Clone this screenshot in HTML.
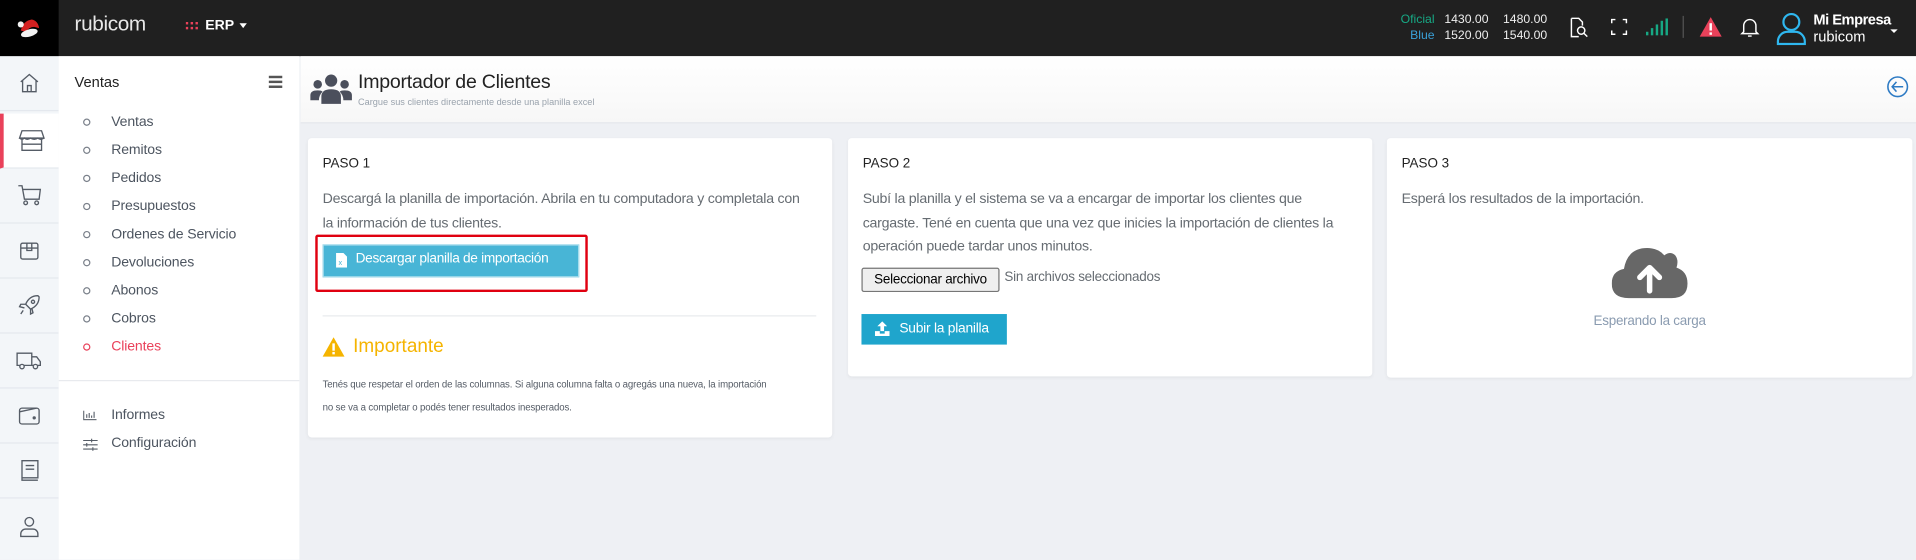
<!DOCTYPE html>
<html><head><meta charset="utf-8">
<style>
*{box-sizing:border-box;margin:0;padding:0}
html,body{width:1916px;height:559px;overflow:hidden;background:#eef0f4}
#w{position:absolute;left:0;top:0;width:1568px;height:458px;transform:scale(1.22194);transform-origin:0 0;font-family:"Liberation Sans",sans-serif;background:#eef0f4}
.a{position:absolute}
.top{left:0;top:0;width:1568px;height:46px;background:#202020}
.rail{left:0;top:46px;width:48px;height:412px;background:#f3f6f9}
.ri{position:absolute;left:0;width:48px;height:45px;border-bottom:1px solid #e4e8ee;display:flex;align-items:center;justify-content:center}
.sub{left:48px;top:46px;width:197px;height:412px;background:#fff}
.sub .it{position:absolute;left:43px;font-size:11.5px;color:#4d5560;letter-spacing:-.1px}
.sub .dot{position:absolute;left:20px;width:6px;height:6px;border:1px solid #7a808a;border-radius:50%}
.card{position:absolute;background:#fff;border-radius:3px;box-shadow:0 1px 3px rgba(0,0,0,.05)}
.h{position:absolute;font-size:11px;color:#222}
.p{position:absolute;font-size:11.6px;color:#666c72;line-height:19.5px;letter-spacing:-.2px;white-space:nowrap}
</style></head><body><div id="w">
<div class="a top"></div>
<div class="a" style="left:0;top:0;width:48px;height:46px;background:#000"></div>
<svg class="a" style="left:12px;top:12px" width="24" height="22" viewBox="0 0 24 22"><path d="M5 13 Q7 5 14 4 Q19 5 20 11 L16 10 Q12 10 9 14Z" fill="#d42020"/><ellipse cx="12" cy="15" rx="7" ry="3" fill="#f2f2f2" transform="rotate(-15 12 15)"/><circle cx="5" cy="8" r="2.5" fill="#f2f2f2"/></svg>
<div class="a" style="left:61px;top:10px;font-size:17px;color:#e8e8e8;letter-spacing:-.3px">rubicom</div>
<svg class="a" style="left:152px;top:18px" width="10" height="8"><g fill="#e9415a"><rect x="0" y="0" width="2" height="2"/><rect x="4" y="0" width="2" height="2"/><rect x="8" y="0" width="2" height="2"/><rect x="0" y="4" width="2" height="2"/><rect x="4" y="4" width="2" height="2"/><rect x="8" y="4" width="2" height="2"/></g></svg>
<div class="a" style="left:168px;top:15px;font-size:11.5px;color:#fff;font-weight:bold">ERP</div>
<div class="a" style="left:196px;top:19px;border:3.5px solid transparent;border-top:4px solid #fff"></div>
<div class="a" style="left:1140px;top:10px;font-size:10px;color:#17a884;text-align:right;width:34px;line-height:13px">Oficial<br><span style="color:#3aa0d8">Blue</span></div>
<div class="a" style="left:1182px;top:10px;font-size:10px;color:#eee;line-height:13px">1430.00<br>1520.00</div>
<div class="a" style="left:1230px;top:10px;font-size:10px;color:#eee;line-height:13px">1480.00<br>1540.00</div>
<svg class="a" style="left:1282px;top:13px" width="20" height="20" viewBox="0 0 20 20" fill="none" stroke="#fff" stroke-width="1.2"><path d="M4 2h6l3 3v3M4 2v15h6"/><circle cx="12" cy="12" r="3"/><path d="M14 14l3 3"/></svg>
<svg class="a" style="left:1318px;top:15px" width="14" height="14" fill="none" stroke="#fff" stroke-width="1.2"><path d="M1 4V1h3M10 1h3v3M13 10v3h-3M4 13H1v-3"/></svg>
<svg class="a" style="left:1347px;top:15px" width="20" height="14"><g fill="#17a884"><rect x="0" y="11" width="2" height="3"/><rect x="4" y="8" width="2" height="6"/><rect x="8" y="5" width="2" height="9"/><rect x="12" y="2" width="2" height="12"/><rect x="16" y="0" width="2" height="14"/></g></svg>
<div class="a" style="left:1377px;top:13px;width:1px;height:18px;background:#555"></div>
<svg class="a" style="left:1390px;top:13px" width="20" height="18" viewBox="0 0 20 18"><path d="M10 1L19 17H1Z" fill="#e9415a"/><rect x="9" y="6" width="2" height="6" fill="#fff"/><rect x="9" y="13.5" width="2" height="2" fill="#fff"/></svg>
<svg class="a" style="left:1424px;top:12px" width="16" height="20" fill="none" stroke="#fff" stroke-width="1.2"><path d="M3 14V9a5 5 0 0110 0v5l1.5 1.5h-13Z"/><path d="M6.5 17.5h3"/></svg>
<svg class="a" style="left:1453px;top:10px" width="26" height="27" fill="none" stroke="#2fb7ef" stroke-width="1.8"><circle cx="13" cy="8" r="6.5"/><path d="M2 26v-2a8 8 0 018-8h6a8 8 0 018 8v2Z"/></svg>
<div class="a" style="left:1484px;top:9px;font-size:12px;color:#fff;font-weight:bold;letter-spacing:-.4px">Mi Empresa</div>
<div class="a" style="left:1484px;top:23px;font-size:12px;color:#fff">rubicom</div>
<div class="a" style="left:1547px;top:24px;border:3px solid transparent;border-top:3.5px solid #fff"></div>

<div class="a rail"></div>
<div class="ri" style="top:46px"><svg width="18" height="18" fill="none" stroke="#555c66" stroke-width="1.1"><path d="M2 8L9 2l7 6M3.5 7v9h11V7M7.5 16v-5h3v5"/></svg></div>
<div class="ri" style="top:93px;background:#fff;border-left:3px solid #e9415a;height:45px"><svg width="22" height="20" fill="none" stroke="#555c66" stroke-width="1.1"><path d="M3 2h16l2 6H1Z"/><path d="M1 8q2 2 4 0q2 2 5 0q3 2 6 0q2 2 5 0M3 9v9h16V9M3 13h16"/></svg></div>
<div class="ri" style="top:138px"><svg width="20" height="18" fill="none" stroke="#555c66" stroke-width="1.1"><path d="M1 1h3l2 11h12l1-8H5"/><circle cx="7" cy="15" r="1.5"/><circle cx="16" cy="15" r="1.5"/></svg></div>
<div class="ri" style="top:183px"><svg width="18" height="18" fill="none" stroke="#555c66" stroke-width="1.1"><rect x="2" y="3" width="14" height="13" rx="1.5"/><path d="M2 7h14M7 3v6h4V3"/></svg></div>
<div class="ri" style="top:228px"><svg width="20" height="20" fill="none" stroke="#555c66" stroke-width="1.1"><path d="M17 2q-7 0-10 7l4 4q7-3 7-10ZM7 9L3 9l-1 2 4 1M11 13l0 4 2-1 -1-4M5 14l-2 3"/><circle cx="13" cy="7" r="1.3"/></svg></div>
<div class="ri" style="top:273px"><svg width="22" height="18" fill="none" stroke="#555c66" stroke-width="1.1"><path d="M1 3h12v10H1ZM13 6h4l3 4v3h-7"/><circle cx="5" cy="14" r="1.8" fill="#f3f6f9"/><circle cx="16" cy="14" r="1.8" fill="#f3f6f9"/></svg></div>
<div class="ri" style="top:318px"><svg width="20" height="18" fill="none" stroke="#555c66" stroke-width="1.1"><rect x="2" y="3" width="16" height="13" rx="2"/><path d="M2 6l14-3"/><circle cx="14" cy="11" r=".8" fill="#555c66"/></svg></div>
<div class="ri" style="top:363px"><svg width="18" height="20" fill="none" stroke="#555c66" stroke-width="1.1"><path d="M3 2h13v14H3ZM3 16v2h13M6 6h7M6 9h7"/></svg></div>
<div class="ri" style="top:408px;border:none"><svg width="18" height="20" fill="none" stroke="#555c66" stroke-width="1.1"><circle cx="9" cy="6" r="3.5"/><path d="M2 18v-2a4 4 0 014-4h6a4 4 0 014 4v2Z"/></svg></div>

<div class="a sub">
<div class="a" style="left:13px;top:14px;font-size:12px;color:#222">Ventas</div>
<div class="a" style="left:172px;top:16px;width:11px;height:2px;background:#555;box-shadow:0 4px #555,0 8px #555"></div>
<div class="dot" style="top:51px"></div><div class="it" style="top:48px">Ventas</div>
<div class="dot" style="top:74px"></div><div class="it" style="top:71px">Remitos</div>
<div class="dot" style="top:97px"></div><div class="it" style="top:94px">Pedidos</div>
<div class="dot" style="top:120px"></div><div class="it" style="top:117px">Presupuestos</div>
<div class="dot" style="top:143px"></div><div class="it" style="top:140px">Ordenes de Servicio</div>
<div class="dot" style="top:166px"></div><div class="it" style="top:163px">Devoluciones</div>
<div class="dot" style="top:189px"></div><div class="it" style="top:186px">Abonos</div>
<div class="dot" style="top:212px"></div><div class="it" style="top:209px">Cobros</div>
<div class="dot" style="top:235px;border-color:#e9415a"></div><div class="it" style="top:232px;color:#e9415a">Clientes</div>
<div class="a" style="left:0;top:265px;width:197px;height:1px;background:#e8eaee"></div>
<svg class="a" style="left:20px;top:290px" width="11" height="8" fill="none" stroke="#555c66" stroke-width=".9"><path d="M.5 0v7.5H11M3 6V3M5 6V2M7 6V4M9 6V1"/></svg>
<div class="it" style="top:288px">Informes</div>
<svg class="a" style="left:20px;top:313px" width="12" height="10" fill="none" stroke="#555c66" stroke-width=".9"><path d="M0 1.5h12M0 5h12M0 8.5h12"/><path d="M7 0v3M3 3.5v3M8 7v3"/></svg>
<div class="it" style="top:311px">Configuración</div>
</div>

<div class="a" style="left:246px;top:46px;width:1322px;height:55px;background:linear-gradient(#fff,#f7f7f7);border-bottom:1px solid #e6e8ec"></div>
<svg class="a" style="left:253px;top:60px" width="36" height="26" viewBox="0 0 36 26" fill="#4b4f5c"><circle cx="18" cy="6" r="5"/><circle cx="7" cy="9" r="3.5"/><circle cx="29" cy="9" r="3.5"/><path d="M10 25v-6q0-6 8-6t8 6v6Z"/><path d="M1 22v-4q0-4 6-4q3 0 4 1q-3 3-3 7Z"/><path d="M35 22v-4q0-4-6-4q-3 0-4 1q3 3 3 7Z"/></svg>
<div class="a" style="left:293px;top:59px;font-size:16px;color:#222;letter-spacing:-.2px">Importador de Clientes</div>
<div class="a" style="left:293px;top:79px;font-size:7.5px;color:#9aa3ad">Cargue sus clientes directamente desde una planilla excel</div>
<svg class="a" style="left:1544px;top:62px" width="18" height="18" fill="none" stroke="#2e7bc4" stroke-width="1.3"><circle cx="9" cy="9" r="8"/><path d="M13.5 9h-9M8 5L4.5 9 8 13"/></svg>

<div class="card" style="left:252px;top:113px;width:429px;height:245px">
<div class="h" style="left:12px;top:15px">PASO 1</div>
<div class="p" style="left:12px;top:40px">Descargá la planilla de importación. Abrila en tu computadora y completala con<br>la información de tus clientes.</div>
<div class="a" style="left:6px;top:79px;width:223px;height:47px;border:2.5px solid #e00010;border-radius:2px"></div>
<div class="a" style="left:12px;top:87px;width:210px;height:27px;background:#48b5d6;border:1.5px solid #a6dcec"></div>
<svg class="a" style="left:23px;top:94px" width="9" height="12"><path d="M0 0h6l3 3v9H0Z" fill="#fff"/><text x="2" y="10" font-size="6" fill="#48b5d6" font-family="Liberation Sans">x</text></svg>
<div class="a" style="left:39px;top:93px;font-size:11.2px;color:#fff;letter-spacing:-.25px">Descargar planilla de importación</div>
<div class="a" style="left:12px;top:145px;width:404px;height:1px;background:#e9ebee"></div>
<svg class="a" style="left:12px;top:163px" width="18" height="16"><path d="M9 0L18 16H0Z" fill="#f5b400"/><rect x="8" y="5" width="2" height="6" fill="#fff"/><rect x="8" y="12" width="2" height="2" fill="#fff"/></svg>
<div class="a" style="left:37px;top:162px;font-size:15.5px;color:#f5b400">Importante</div>
<div class="a" style="left:12px;top:192px;font-size:7.9px;color:#555c66;line-height:19px;width:420px;letter-spacing:-.1px;white-space:nowrap">Tenés que respetar el orden de las columnas. Si alguna columna falta o agregás una nueva, la importación<br>no se va a completar o podés tener resultados inesperados.</div>
</div>

<div class="card" style="left:694px;top:113px;width:429px;height:195px">
<div class="h" style="left:12px;top:15px">PASO 2</div>
<div class="p" style="left:12px;top:40px">Subí la planilla y el sistema se va a encargar de importar los clientes que<br>cargaste. Tené en cuenta que una vez que inicies la importación de clientes la<br>operación puede tardar unos minutos.</div>
<div class="a" style="left:11px;top:106px;width:113px;height:20px;background:#efefef;border:1px solid #767676;border-radius:2px;font-size:11px;color:#000;text-align:center;line-height:18px;letter-spacing:-.2px">Seleccionar archivo</div>
<div class="a" style="left:128px;top:108px;font-size:11px;color:#666c72;letter-spacing:-.2px">Sin archivos seleccionados</div>
<div class="a" style="left:11px;top:144px;width:119px;height:25px;background:#1fa5cc"></div>
<svg class="a" style="left:22px;top:150px" width="12" height="12"><path d="M6 0L10 4H7.5v4h-3V4H2Z" fill="#fff"/><path d="M0 8h4v2h4V8h4v4H0Z" fill="#fff"/></svg>
<div class="a" style="left:42px;top:150px;font-size:11.3px;color:#fff;letter-spacing:-.2px">Subir la planilla</div>
</div>

<div class="card" style="left:1135px;top:113px;width:430px;height:196px">
<div class="h" style="left:12px;top:15px">PASO 3</div>
<div class="p" style="left:12px;top:40px">Esperá los resultados de la importación.</div>
<svg class="a" style="left:184px;top:86px" width="62" height="46" viewBox="0 0 62 46"><path d="M14 45Q0 45 0 33Q0 23 10 21Q13 4 29 4Q38 4 43 10Q48 6 52 10Q55 14 53 20Q62 23 62 33Q62 45 49 45Z" fill="#676767"/><path d="M31 39V21M23 28L31 20L39 28" stroke="#fff" stroke-width="4.5" fill="none" stroke-linecap="round" stroke-linejoin="round"/></svg>
<div class="a" style="left:0;top:144px;width:430px;text-align:center;font-size:11px;color:#8a9bb0;letter-spacing:-.2px">Esperando la carga</div>
</div>
</div></body></html>
